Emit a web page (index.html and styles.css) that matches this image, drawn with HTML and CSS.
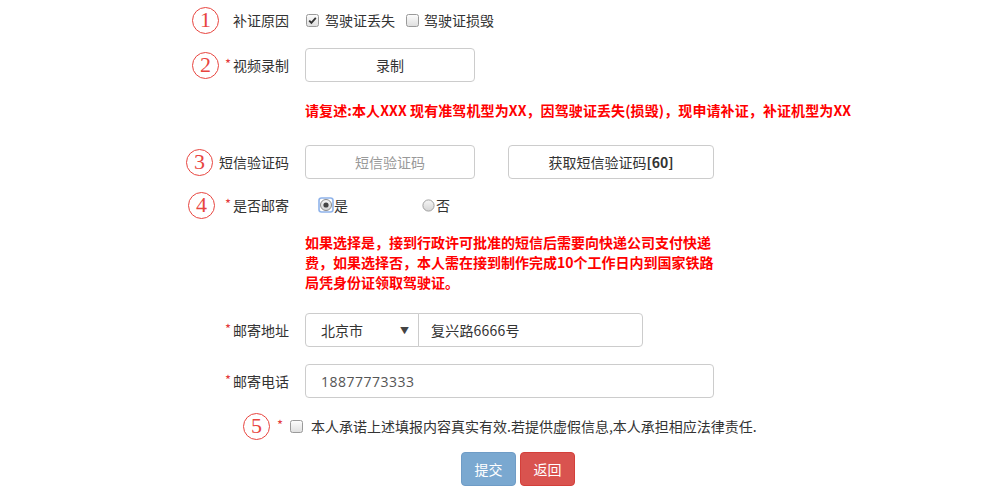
FILE: index.html
```html
<!DOCTYPE html>
<html lang="zh-CN">
<head>
<meta charset="utf-8">
<title>补证申请</title>
<link rel="stylesheet" href="styles.css">
</head>
<body>
<div class="form">
  <div class="row r1">
    <div class="lab"><span class="num num-1">1</span><span class="t">补证原因</span></div>
    <div class="ctl">
      <span class="cb cb-first"><svg width="13" height="13" viewBox="0 0 13 13"><defs><linearGradient id="g1" x1="0" y1="0" x2="0" y2="1"><stop offset="0" stop-color="#fdfdfd"/><stop offset="1" stop-color="#dedede"/></linearGradient></defs><rect x="0.5" y="0.5" width="12" height="12" rx="2" fill="url(#g1)" stroke="#9a9a9a"/><path d="M3.2 6.6 L5.4 8.9 L9.8 3.9" fill="none" stroke="#333" stroke-width="1.8"/></svg></span>
      <span class="opt">驾驶证丢失</span>
      <span class="cb cb-second"><svg width="13" height="13" viewBox="0 0 13 13"><rect x="0.5" y="0.5" width="12" height="12" rx="2" fill="url(#g1)" stroke="#9a9a9a"/></svg></span>
      <span class="opt opt-2">驾驶证损毁</span>
    </div>
  </div>

  <div class="row r2">
    <div class="lab"><span class="num num-2">2</span><span class="star">*</span><span class="t">视频录制</span></div>
    <div class="ctl"><button class="btn-default btn-record">录制</button></div>
  </div>

  <div class="row r-note">
    <div class="lab"></div>
    <div class="ctl note">请复述:本人XXX 现有准驾机型为XX，因驾驶证丢失(损毁)，现申请补证，补证机型为XX</div>
  </div>

  <div class="row r3">
    <div class="lab"><span class="num num-3">3</span><span class="t">短信验证码</span></div>
    <div class="ctl">
      <div class="input input-code placeholder">短信验证码</div>
      <button class="btn-default btn-sms">获取短信验证码<b>[60]</b></button>
    </div>
  </div>

  <div class="row r4">
    <div class="lab"><span class="num num-4">4</span><span class="star">*</span><span class="t">是否邮寄</span></div>
    <div class="ctl">
      <span class="radio radio-yes"><svg width="16" height="16" viewBox="0 0 16 16"><defs><linearGradient id="g2" x1="0" y1="0" x2="0" y2="1"><stop offset="0" stop-color="#f6f6f6"/><stop offset="1" stop-color="#d4d4d4"/></linearGradient></defs><rect x="1" y="1" width="14" height="14" rx="2.5" fill="none" stroke="#8fb3ea" stroke-width="1.6"/><circle cx="8" cy="8" r="5.5" fill="url(#g2)" stroke="#8c8c8c"/><circle cx="8" cy="8" r="2.6" fill="#444"/></svg></span>
      <span class="ropt">是</span>
      <span class="radio radio-no"><svg width="13" height="13" viewBox="0 0 13 13"><circle cx="6.5" cy="6.5" r="5.6" fill="url(#g2)" stroke="#a0a0a0"/></svg></span>
      <span class="ropt ropt-no">否</span>
    </div>
  </div>

  <div class="row r-para">
    <div class="lab"></div>
    <div class="ctl para">如果选择是，接到行政许可批准的短信后需要向快递公司支付快递费，如果选择否，本人需在接到制作完成10个工作日内到国家铁路局凭身份证领取驾驶证。</div>
  </div>

  <div class="row r-addr">
    <div class="lab"><span class="star">*</span><span class="t">邮寄地址</span></div>
    <div class="ctl">
      <div class="select"><span>北京市</span><span class="arrow">▼</span></div>
      <div class="input input-addr">复兴路6666号</div>
    </div>
  </div>

  <div class="row r-phone">
    <div class="lab"><span class="star">*</span><span class="t">邮寄电话</span></div>
    <div class="ctl">
      <div class="input input-phone">18877773333</div>
    </div>
  </div>

  <div class="row r5">
    <span class="num num-5">5</span><span class="star star-5">*</span>
    <span class="cb cb-agree"><svg width="13" height="13" viewBox="0 0 13 13"><rect x="0.5" y="0.5" width="12" height="12" rx="2" fill="url(#g1)" stroke="#9a9a9a"/></svg></span>
    <span class="agree">本人承诺上述填报内容真实有效.若提供虚假信息,本人承担相应法律责任.</span>
  </div>

  <div class="row r-btns">
    <button class="btn btn-submit">提交</button>
    <button class="btn btn-back">返回</button>
  </div>
</div>
</body>
</html>
```

FILE: styles.css
```css
html, body {
  margin: 0;
  padding: 0;
  background: #fff;
}
body {
  font-family: "Noto Sans CJK SC", "Open Sans", sans-serif;
  font-size: 14px;
  color: #333;
  width: 988px;
  height: 491px;
  overflow: hidden;
}
.form {
  display: flex;
  flex-direction: column;
}
.row {
  display: flex;
  align-items: center;
}
.lab {
  width: 289px;
  flex-shrink: 0;
  display: flex;
  justify-content: flex-end;
  align-items: center;
  line-height: 20px;
}
.ctl {
  margin-left: 16px;
  display: flex;
  align-items: center;
}
.num {
  width: 27px;
  height: 27px;
  box-sizing: border-box;
  border: 1.3px solid #e8453f;
  border-radius: 50%;
  color: #e8453f;
  font-family: "Liberation Serif", serif;
  font-size: 22px;
  line-height: 1;
  display: flex;
  align-items: center;
  justify-content: center;
  flex-shrink: 0;
}
.num-1 { margin-right: 14px; }
.num-2 { margin-right: 6px; }
.num-3 { margin-right: 6px; }
.num-4 { margin-right: 10px; }
.star {
  color: #e4393c;
  width: 8px;
  font-size: 13px;
  display: inline-block;
  line-height: 14px;
  margin-bottom: 2px;
}
.t { white-space: nowrap; }

/* row 1 */
.r1 { margin-top: 3px; height: 34px; }
.cb { display: flex; }
.cb-first { margin-left: 1px; }
.opt { margin-left: 6px; line-height: 20px; }
.cb-second { margin-left: 11px; }
.opt-2 { margin-left: 5px; }

/* row 2 */
.r2 { margin-top: 11px; height: 34px; }
.btn-default {
  box-sizing: border-box;
  height: 34px;
  border: 1px solid #ccc;
  border-radius: 4px;
  background: #fff;
  color: #333;
  font-family: "Noto Sans CJK SC", "Open Sans", sans-serif;
  font-size: 14px;
  padding: 0 12px;
}
.btn-record { width: 170px; }

/* note */
.r-note { margin-top: 18px; height: 20px; }
.note {
  color: #f00;
  font-weight: bold;
  white-space: nowrap;
  line-height: 20px;
  letter-spacing: 0.1px;
}

/* row 3 */
.r3 { margin-top: 25px; height: 34px; }
.input {
  box-sizing: border-box;
  height: 34px;
  border: 1px solid #ccc;
  border-radius: 4px;
  background: #fff;
  display: flex;
  align-items: center;
  padding: 0 12px;
  color: #555;
}
.input-code {
  width: 170px;
  justify-content: center;
}
.placeholder { color: #999; }
.btn-sms {
  width: 206px;
  margin-left: 33px;
}
.btn-sms b { font-weight: bold; }

/* row 4 */
.r4 { margin-top: 12px; height: 28px; }
.radio { display: flex; }
.radio-yes { margin-left: 13px; }
.ropt { line-height: 20px; }
.radio-no { margin-left: 74px; }
.ropt-no { margin-left: 1px; }

/* paragraph */
.r-para { margin-top: 13px; align-items: flex-start; }
.para {
  display: block;
  width: 412px;
  color: #f00;
  font-weight: bold;
  line-height: 20px;
}

/* address */
.r-addr { margin-top: 21px; height: 34px; }
.select {
  box-sizing: border-box;
  width: 114px;
  height: 34px;
  border: 1px solid #ccc;
  border-radius: 4px 0 0 4px;
  display: flex;
  align-items: center;
  justify-content: space-between;
  padding: 0 9px 0 15px;
  color: #333;
}
.arrow {
  font-size: 9px;
  color: #444;
}
.input-addr {
  width: 225px;
  margin-left: -1px;
  border-radius: 0 4px 4px 0;
  color: #333;
  letter-spacing: 0.2px;
}

/* phone */
.r-phone { margin-top: 17px; height: 34px; }
.input-phone {
  width: 409px;
  padding-left: 15px;
  color: #555;
  letter-spacing: 0.5px;
  font-family: "Open Sans", "Noto Sans CJK SC", sans-serif;
}

/* row 5 */
.r5 { margin-top: 14px; height: 28px; padding-left: 243px; }
.star-5 { margin-left: 7px; width: 7px; }
.cb-agree { margin-left: 6px; }
.agree { margin-left: 8px; line-height: 20px; white-space: nowrap; }

/* buttons */
.r-btns { margin-top: 12px; padding-left: 461px; gap: 4px; }
.btn {
  box-sizing: border-box;
  width: 55px;
  height: 34px;
  border: 1px solid transparent;
  border-radius: 4px;
  color: #fff;
  font-family: "Noto Sans CJK SC", sans-serif;
  font-size: 14px;
  padding: 0;
}
.btn-submit {
  background: #7aa8d0;
  border-color: #6f9cc6;
}
.btn-back {
  background: #d9534f;
  border-color: #d43f3a;
}
```
